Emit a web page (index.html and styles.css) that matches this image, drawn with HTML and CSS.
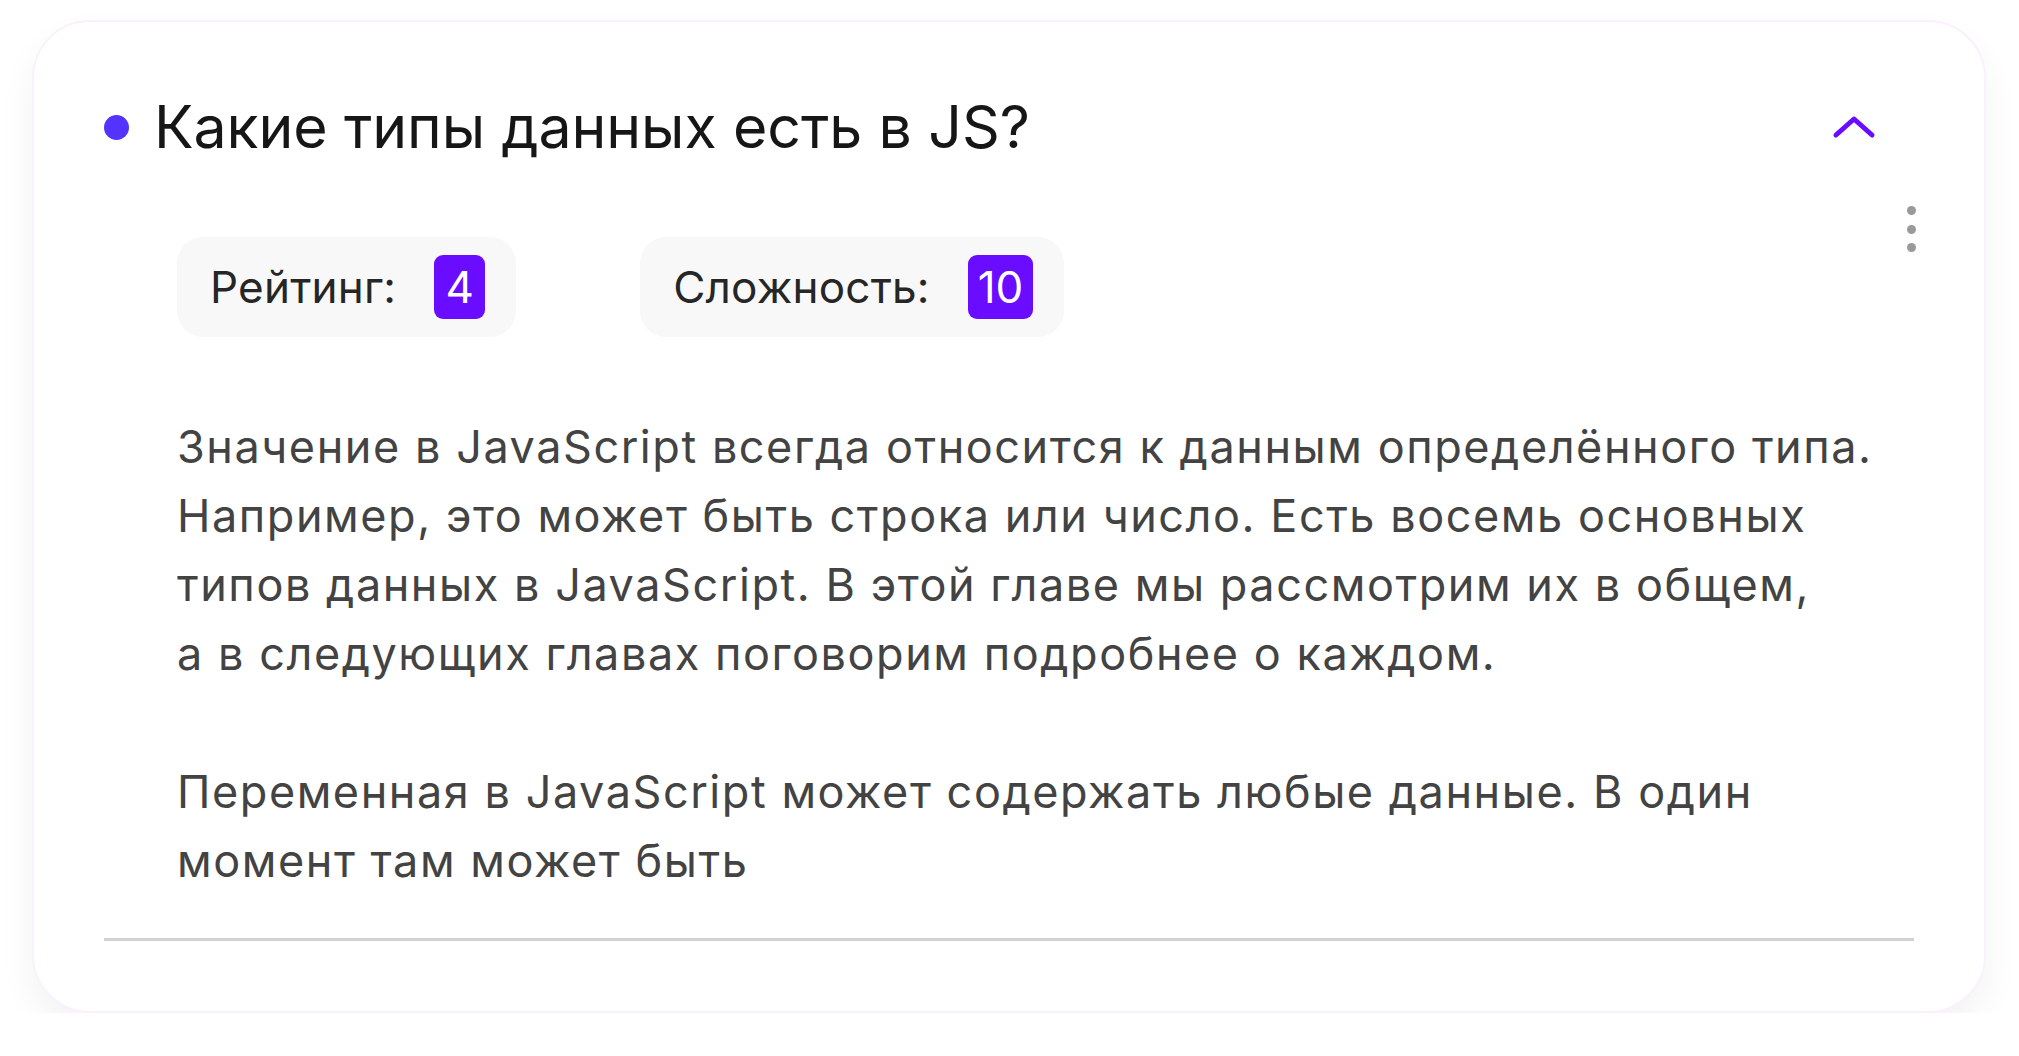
FILE: index.html
```html
<!DOCTYPE html>
<html lang="ru">
<head>
<meta charset="utf-8">
<title>Вопрос</title>
<link rel="stylesheet" href="styles.css">
</head>
<body>
<div class="card">
  <div class="header">
    <span class="bullet"></span>
    <h2 class="title">Какие типы данных есть в JS?</h2>
    <svg class="chevron" width="44" height="24" viewBox="0 0 44 24"><polyline points="4,20 22,4 40,20" fill="none" stroke="#6a0cff" stroke-width="5" stroke-linecap="round" stroke-linejoin="round"/></svg>
  </div>
  <div class="kebab"><span></span><span></span><span></span></div>
  <div class="badges">
    <div class="badge"><span class="badge-label">Рейтинг:</span><span class="badge-num">4</span></div>
    <div class="badge"><span class="badge-label">Сложность:</span><span class="badge-num">10</span></div>
  </div>
  <div class="body">
    <p>Значение в JavaScript всегда относится к данным определённого типа.<br>Например, это может быть строка или число. Есть восемь основных<br>типов данных в JavaScript. В этой главе мы рассмотрим их в общем,<br>а в следующих главах поговорим подробнее о каждом.</p>
    <p>Переменная в JavaScript может содержать любые данные. В один<br>момент там может быть</p>
  </div>
  <div class="divider"></div>
</div>
</body>
</html>
```

FILE: styles.css
```css
html, body {
  margin: 0;
  padding: 0;
  background: #ffffff;
}
body {
  font-family: Inter, "Noto Sans", sans-serif;
}
.card {
  position: relative;
  box-sizing: border-box;
  width: 1954px;
  margin: 20px 0 0 32px;
  border: 2px solid #fbf0fd;
  border-radius: 58px;
  background: #ffffff;
  box-shadow: 0 18px 36px rgba(0, 0, 0, 0.05);
  padding: 69px 70px 70px 70px;
}
.header {
  display: flex;
  align-items: center;
  height: 72px;
  padding-right: 38px;
}
.bullet {
  width: 25px;
  height: 25px;
  border-radius: 50%;
  background: #5533ff;
  flex: none;
  margin-right: 25px;
}
.title {
  margin: 0;
  flex: 1;
  font-size: 59px;
  font-weight: 400;
  line-height: 72px;
  color: #161616;
  letter-spacing: -0.1px;
}
.chevron {
  flex: none;
  display: block;
}
.kebab {
  position: absolute;
  top: 184px;
  right: 68px;
  display: flex;
  flex-direction: column;
  gap: 9.5px;
}
.kebab span {
  width: 9px;
  height: 9px;
  border-radius: 50%;
  background: #9a9a9a;
}
.badges {
  display: flex;
  gap: 124px;
  margin: 74px 0 0 73px;
}
.badge {
  display: flex;
  align-items: center;
  height: 100px;
  box-sizing: border-box;
  padding: 0 31px 0 33px;
  background: #f8f8f8;
  border-radius: 26px;
}
.badge-label {
  font-size: 44px;
  color: #262626;
  margin-right: 38px;
  letter-spacing: 0.2px;
}
.badge-num {
  height: 64px;
  min-width: 51px;
  box-sizing: border-box;
  padding: 0 10px;
  border-radius: 9px;
  background: #6a0cff;
  color: #ffffff;
  font-size: 44px;
  line-height: 64px;
  text-align: center;
}
.body {
  margin: 75px 0 0 73px;
  color: #434343;
  font-size: 45px;
  line-height: 69px;
  letter-spacing: 1.55px;
}
.body p {
  margin: 0;
  white-space: nowrap;
}
.body p + p {
  margin-top: 69px;
}
.divider {
  margin-top: 43px;
  height: 3px;
  background: #d2d2d2;
}
```
